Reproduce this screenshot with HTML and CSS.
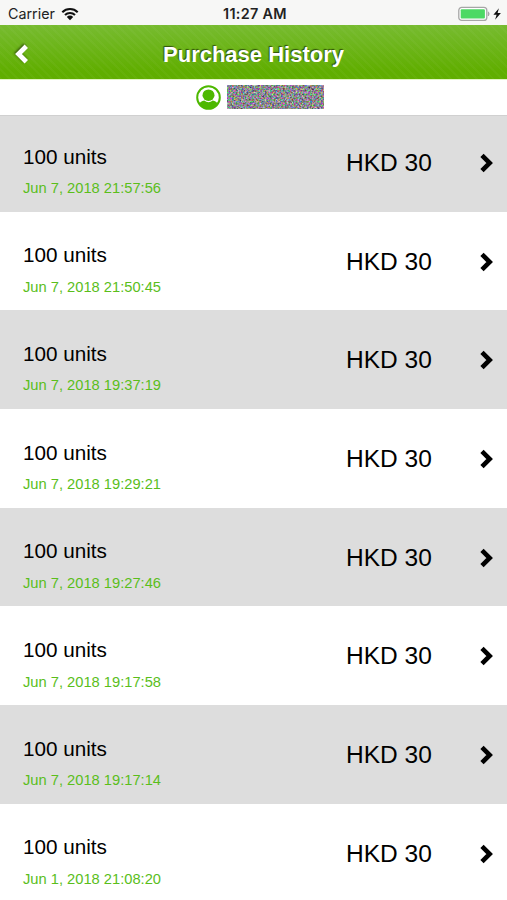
FILE: index.html
```
<!DOCTYPE html>
<html lang="en">
<head>
    <meta charset="UTF-8">
    <meta name="viewport" content="width=device-width, initial-scale=1.0">
    <link rel="stylesheet" href="styles.css">
    <title>Purchase History</title>
</head>
<body>

    <div class="status">
        <div class="carrier">
            <span>Carrier</span>
            <svg class="wifi" width="18" height="14" viewBox="0 0 18 14">
                <path d="M1.3 5.2a11 11 0 0 1 15.4 0M4 8a7.1 7.1 0 0 1 10 0" fill="none" stroke="#111" stroke-width="2.1"/>
                <path d="M5.8 9.9a4.5 4.5 0 0 1 6.4 0L9 13.2z" fill="#111"/>
            </svg>
        </div>
        <div class="time">11:27 AM</div>
        <div class="power">
            <svg width="44" height="16" viewBox="0 0 44 16">
                <rect x="0.8" y="1.4" width="28" height="13" rx="3" fill="#fff" stroke="#a6a6a6" stroke-width="1.3"/>
                <rect x="2.7" y="3.3" width="24.2" height="9.2" rx="1" fill="#4cd964"/>
                <path d="M30.4 5.8q1.6 2.1 0 4.2z" fill="#999" stroke="#999" stroke-width="0.6"/>
                <path d="M40.9 2.3L35.4 8.8h3.2l-1.5 5 5.8-6.9h-3.3z" fill="#111"/>
            </svg>
        </div>
    </div>

    <header class="navbar">
        <svg class="back" width="15" height="22" viewBox="0 0 15 22">
            <path d="M12.3 3.2L4.500 11l7.800 7.800" fill="none" stroke="#fff" stroke-width="4.800"/>
        </svg>
        <h1>Purchase History</h1>
    </header>

    <div class="user">
        <svg width="25" height="25" viewBox="0 0 25 25">
            <circle cx="12.5" cy="12.5" r="11.3" fill="#fff" stroke="#4db800" stroke-width="2"/>
            <path d="M3.2 19.2c.8-2.200 2.600-3.200 5-3.700q4.300 3.400 8.600 0c2.400.5 4.200 1.500 5 3.700A11.300 11.300 0 0 1 3.200 19.200z" fill="#4db800"/>
            <ellipse cx="12.5" cy="10.200" rx="6" ry="5.800" fill="#4db800"/>
        </svg>
        <svg class="masked" width="97" height="24" viewBox="0 0 97 24">
            <filter id="noise" x="0" y="0" width="100%" height="100%" color-interpolation-filters="sRGB">
                <feTurbulence type="fractalNoise" baseFrequency="0.55" numOctaves="2" seed="4"/>
                <feColorMatrix values="1.2 0 0 0 -0.06  0 1.2 0 0 -0.06  0 0 1.2 0 -0.04  0 0 0 0 1"/>
            </filter>
            <rect width="97" height="24" filter="url(#noise)"/>
        </svg>
    </div>

    <div class="list" id="list"></div>

    <script>
        const purchases = [
            { units: 100, date: 'Jun 7, 2018 21:57:56', price: 'HKD 30' },
            { units: 100, date: 'Jun 7, 2018 21:50:45', price: 'HKD 30' },
            { units: 100, date: 'Jun 7, 2018 19:37:19', price: 'HKD 30' },
            { units: 100, date: 'Jun 7, 2018 19:29:21', price: 'HKD 30' },
            { units: 100, date: 'Jun 7, 2018 19:27:46', price: 'HKD 30' },
            { units: 100, date: 'Jun 7, 2018 19:17:58', price: 'HKD 30' },
            { units: 100, date: 'Jun 7, 2018 19:17:14', price: 'HKD 30' },
            { units: 100, date: 'Jun 1, 2018 21:08:20', price: 'HKD 30' }
        ];

        const list = document.getElementById('list');
        for (const item of purchases) {
            const row = document.createElement('div');
            row.className = 'row';
            row.innerHTML = `
                <div class="info">
                    <div class="units">${item.units} units</div>
                    <div class="date">${item.date}</div>
                </div>
                <div class="price">${item.price}</div>
                <svg class="arrow" width="15" height="20" viewBox="0 0 15 20">
                    <path d="M3 2.3L10.700 10 3 17.700" fill="none" stroke="#000" stroke-width="4.600"/>
                </svg>`;
            list.appendChild(row);
        }
    </script>

</body>
</html>
```
FILE: styles.css
```
* {
    box-sizing: border-box;
}

body {
    margin: 0;
    height: 900px;
    overflow: hidden;
    background-color: #fff;
    font-family: "Liberation Sans", Arial, sans-serif;
    color: #000;
}

svg {
    display: block;
}

.status {
    display: grid;
    grid-template-columns: 1fr auto 1fr;
    align-items: center;
    height: 25px;
    padding: 2px 5px 0 8px;
    background-color: #f7f7f6;
    font-family: Inter, sans-serif;
    font-size: 14.3px;
    line-height: 20px;
    color: #222;
}

.carrier {
    display: flex;
    align-items: center;
    gap: 6px;
}

.time {
    font-size: 14.4px;
    font-weight: 600;
    letter-spacing: 0.3px;
}

.power {
    justify-self: end;
}

.navbar {
    display: grid;
    grid-template-columns: 40px 1fr 40px;
    align-items: center;
    height: 54px;
    padding: 3px 0 0;
    background-image: repeating-linear-gradient(45deg, rgba(255, 255, 255, 0.03) 0 2px, transparent 2px 6px),
        linear-gradient(#77bb30, #60ae00 85%);
    color: #fff;
}

.navbar h1 {
    margin: 0;
    padding-top: 2px;
    font-size: 22px;
    line-height: 28px;
    text-align: center;
    text-shadow: -1px -1px 1px rgba(0, 0, 0, 0.55);
}

.back {
    margin-left: 14px;
    filter: drop-shadow(-1px -1px 1px rgba(0, 0, 0, 0.5));
}

/* the list starts slightly under this bar */
.user {
    position: relative;
    z-index: 1;
    display: flex;
    align-items: center;
    justify-content: center;
    gap: 6px;
    height: 37px;
    padding: 0 0 1px 12px;
    background-color: #fff;
    border-top: 1px solid #e2f6c4;
    border-bottom: 1px solid #d0d0d0;
}

.list {
    margin-top: -3px;
}

.row {
    display: flex;
    align-items: center;
    height: 98.7px;
    padding: 1px 13px 0 23px;
}

.row:nth-child(odd) {
    background-color: #ddd;
}

.info {
    flex: 1;
    padding-top: 19px;
}

.units {
    font-size: 20.7px;
    line-height: 28px;
}

.date {
    margin-top: 3.5px;
    font-size: 14.7px;
    line-height: 28px;
    color: #5abe1b;
}

.price {
    width: 133px;
    font-size: 24.5px;
    line-height: 30px;
}
```
